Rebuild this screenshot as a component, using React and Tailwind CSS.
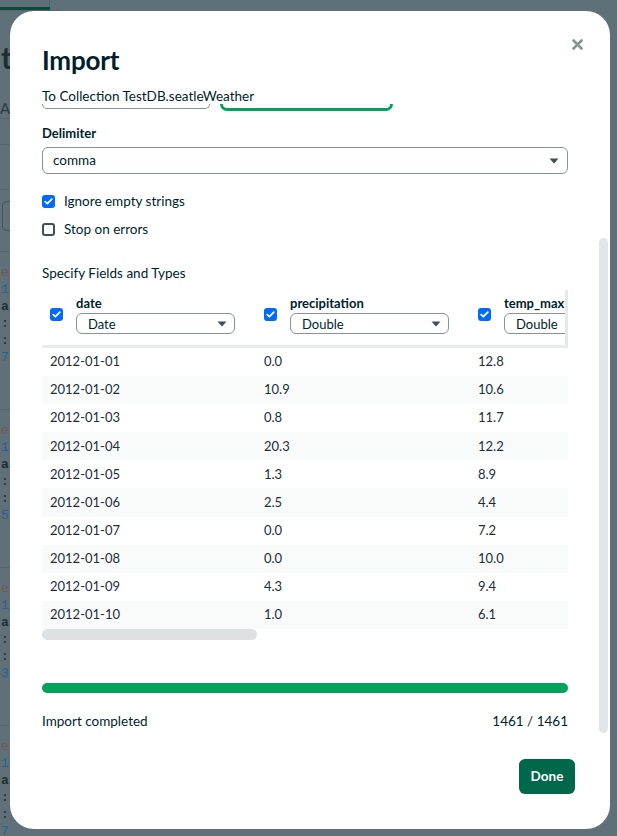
import React from 'react';

const rows = [
  ['2012-01-01', '0.0', '12.8'],
  ['2012-01-02', '10.9', '10.6'],
  ['2012-01-03', '0.8', '11.7'],
  ['2012-01-04', '20.3', '12.2'],
  ['2012-01-05', '1.3', '8.9'],
  ['2012-01-06', '2.5', '4.4'],
  ['2012-01-07', '0.0', '7.2'],
  ['2012-01-08', '0.0', '10.0'],
  ['2012-01-09', '4.3', '9.4'],
  ['2012-01-10', '1.0', '6.1'],
];

const fields = [
  ['date', 'Date'],
  ['precipitation', 'Double'],
  ['temp_max', 'Double'],
];

function Caret() {
  return (
    <svg width="10" height="6" viewBox="0 0 10 6" className="shrink-0">
      <path d="M0.5 0.5 L9.5 0.5 L5 5.5 Z" fill="#3d4f58" />
    </svg>
  );
}

function Checkbox({ checked }) {
  if (!checked) {
    return <span className="block w-[13px] h-[13px] rounded-[3px] border-2 border-[#3d4f58] bg-white shrink-0" />;
  }
  return (
    <span className="flex items-center justify-center w-[13px] h-[13px] rounded-[3px] bg-[#016bf8] shrink-0">
      <svg width="9" height="7" viewBox="0 0 9 7">
        <path d="M1.2 3.6 L3.4 5.6 L7.8 1.2" fill="none" stroke="white" strokeWidth="1.8" strokeLinecap="round" strokeLinejoin="round" />
      </svg>
    </span>
  );
}

function BackdropGroup({ digit }) {
  return (
    <div className="border-t border-[#56656c] pt-[12px] pb-[29px] pl-[1px] font-mono text-[13px] leading-[17px]">
      <div className="text-[#7a5552]">e</div>
      <div className="text-[#2e5f8e]">11</div>
      <div className="text-[#1f2d33] font-bold">a</div>
      <div className="text-[#1f2d33]">:</div>
      <div className="text-[#1f2d33]">:</div>
      <div className="text-[#2e5f8e]">{digit}</div>
      <div className="text-[#4b6270] text-[8px] leading-[14px] pl-[8px]">'</div>
    </div>
  );
}

export default function App() {
  return (
    <div className="relative w-[617px] h-[836px] overflow-hidden bg-[#607079]" style={{ fontFamily: 'Lato, "Liberation Sans", sans-serif' }}>
      {/* dimmed app behind the modal */}
      <div className="w-[60px]">
        <div className="h-[7px] border-r border-[#56656c] w-[50px]" />
        <div className="h-[3px] w-[50px] bg-[#0e4a39]" />
        <div className="h-[1px] bg-[#56656c]" />
        <div className="pl-[1px] pt-[31px] text-[30px] leading-[30px] font-bold text-[#1f2d33]">t</div>
        <div className="pt-[27px] text-[15px] leading-[18px] text-[#2e3d44]">Ag</div>
        <div className="mt-[1px] h-[26px] border-t border-[#56656c]" />
        <div className="h-[45px] border-t border-[#56656c]" />
        <div className="border-t border-[#56656c] pt-[11px] pb-[20px]">
          <div className="w-[14px] h-[30px] ml-[2px] rounded-[5px] border border-[#45545b]" />
        </div>
        <BackdropGroup digit="7" />
        <BackdropGroup digit="5" />
        <BackdropGroup digit="3" />
        <BackdropGroup digit="7" />
      </div>

      {/* modal */}
      <div className="absolute left-[10px] top-[11px] w-[600px] h-[818px] bg-white rounded-[24px] overflow-hidden text-[#001e2b]">
        <button className="absolute right-[27px] top-[27px] w-[12px] h-[12px] flex items-center justify-center">
          <svg width="11" height="11" viewBox="0 0 11 11">
            <path d="M1.5 1.5 L9.5 9.5 M9.5 1.5 L1.5 9.5" stroke="#889397" strokeWidth="2.6" strokeLinecap="round" />
          </svg>
        </button>

        <div className="absolute right-[2px] top-[227px] w-[9px] h-[495px] rounded-full bg-[#e3e6e8]" />

        <div className="pl-[32px] pr-[42px] pt-[33px]">
          <h1 className="text-[26px] leading-[32px] font-bold tracking-[-0.2px]">Import</h1>

          <div className="mt-[11px] text-[13.5px] leading-[18px] text-[#001e2b]">To Collection TestDB.seatleWeather</div>
          <div className="flex gap-[10px] h-[7px] -mt-[1px]">
            <div className="w-[168px] h-[5px] rounded-b-[6px] border-b border-x border-[#889397]" />
            <div className="w-[173px] h-[7px] rounded-b-[8px] border-b-[3px] border-x-[3px] border-[#00a35c]" />
          </div>

          <div className="mt-[13px] text-[13px] leading-[18px] font-bold">Delimiter</div>
          <div className="mt-[5px] h-[27px] rounded-[6px] border border-[#889397] flex items-center justify-between pl-[10px] pr-[8px]">
            <span className="text-[13.5px] text-[#001e2b]">comma</span>
            <Caret />
          </div>

          <div className="mt-[20px] flex items-center gap-[9px] h-[14px]">
            <Checkbox checked />
            <span className="text-[13.5px] leading-[18px]">Ignore empty strings</span>
          </div>
          <div className="mt-[14px] flex items-center gap-[9px] h-[14px]">
            <Checkbox />
            <span className="text-[13.5px] leading-[18px]">Stop on errors</span>
          </div>

          <div className="mt-[28px] text-[13.5px] leading-[18px]">Specify Fields and Types</div>

          <div className="mt-[8px] w-[526px] overflow-hidden">
            <div className="relative flex h-[58px] border-b-[3px] border-[#e8edeb]">
              {fields.map(([name, type]) => (
                <div key={name} className="w-[214px] shrink-0 flex items-start gap-[13px] pl-[8px] pt-[5px]">
                  <div className="pt-[13px]">
                    <Checkbox checked />
                  </div>
                  <div>
                    <div className="text-[13px] leading-[16px] font-bold">{name}</div>
                    <div className="mt-[2px] w-[159px] h-[21px] rounded-[6px] border border-[#889397] flex items-center justify-between pl-[11px] pr-[7px]">
                      <span className="text-[13px] leading-[16px]">{type}</span>
                      <Caret />
                    </div>
                  </div>
                </div>
              ))}
              <div className="absolute right-0 top-[-8px] bottom-0 w-[3px] bg-[#e6e9ea]" />
            </div>
            {rows.map((r, i) => (
              <div key={r[0]} className={`flex h-[28.1px] items-center text-[13px] text-[#1c2d38] ${i % 2 ? 'bg-[#f9fbfa]' : 'bg-white'}`}>
                <div className="w-[214px] shrink-0 pl-[8px]">{r[0]}</div>
                <div className="w-[214px] shrink-0 pl-[8px]">{r[1]}</div>
                <div className="w-[214px] shrink-0 pl-[8px]">{r[2]}</div>
              </div>
            ))}
            <div className="h-[11px] w-[215px] rounded-full bg-[#dee1e3]" />
          </div>

          <div className="mt-[43px] h-[10px] rounded-full bg-[#00a35c]" />

          <div className="mt-[19px] flex justify-between text-[13.5px] leading-[18px]">
            <span>Import completed</span>
            <span>1461 / 1461</span>
          </div>
        </div>

        <div className="flex justify-end pr-[35px] mt-[29px]">
          <button className="w-[56px] h-[35px] rounded-[6px] bg-[#00684a] text-white text-[13.5px] font-bold">Done</button>
        </div>
      </div>
    </div>
  );
}
